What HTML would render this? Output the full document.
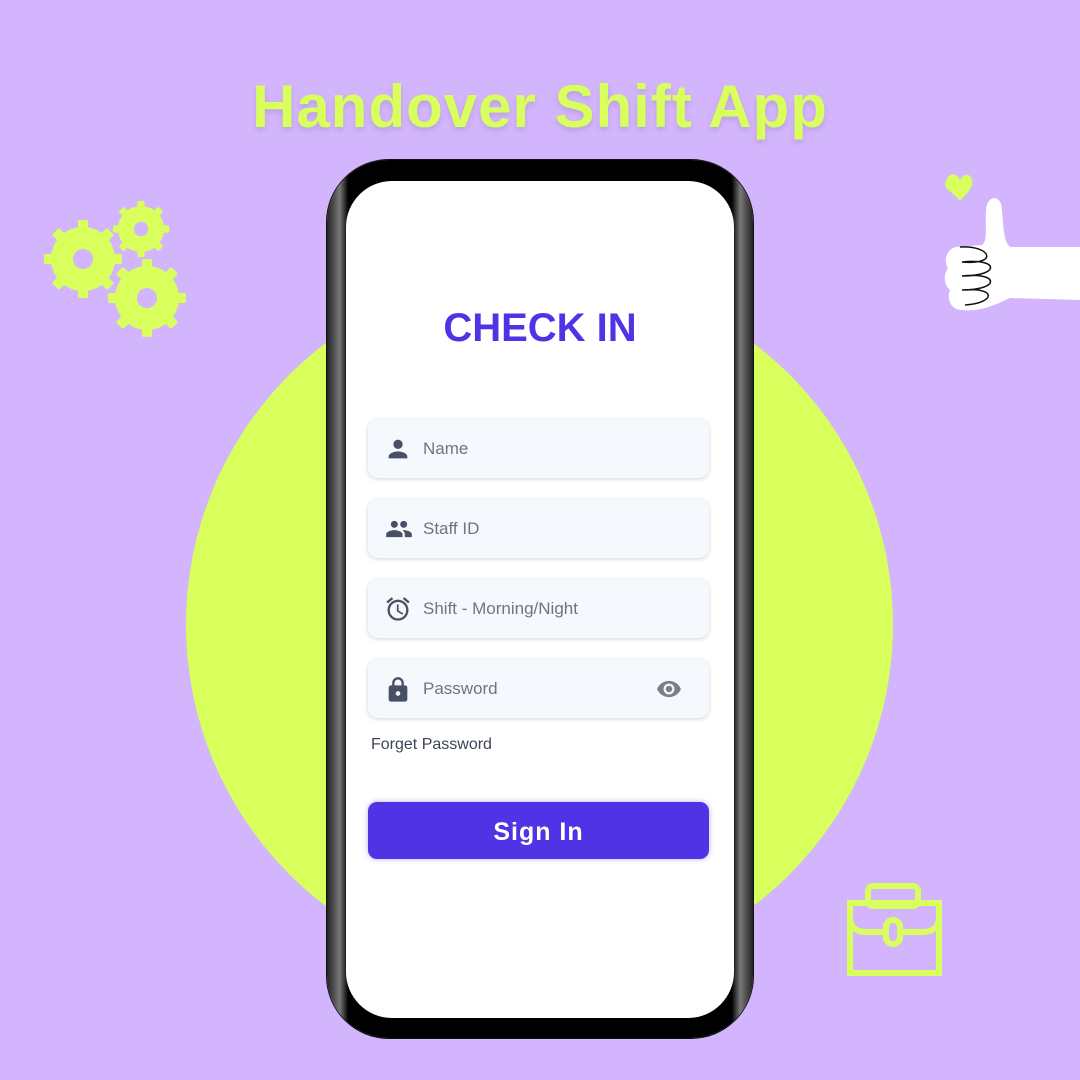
<!DOCTYPE html>
<html><head><meta charset="utf-8"><style>
*{margin:0;padding:0;box-sizing:border-box}
body{width:1080px;height:1080px;background:#d3b5fd;position:relative;overflow:hidden;font-family:"Liberation Sans",sans-serif}
.title{position:absolute;top:72px;left:0;width:1080px;text-align:center;font-size:60px;font-weight:bold;color:#d9ff5c;letter-spacing:1px;text-shadow:0 3px 6px rgba(0,0,0,.12)}
.circle{position:absolute;left:186px;top:271px;width:707px;height:707px;border-radius:50%;background:#d9ff5c}
.phone{position:absolute;left:327px;top:160px;width:426px;height:878px;border-radius:62px;background:linear-gradient(90deg,#222,#777 3%,#000 5%,#000 95%,#777 97%,#222);box-shadow:0 0 0 1px #111}
.screen{position:absolute;left:346px;top:181px;width:388px;height:837px;border-radius:46px;background:#fff}
.h{position:absolute;left:346px;width:388px;top:306px;text-align:center;font-size:40px;font-weight:bold;color:#4f33e4}
.f{position:absolute;left:368px;width:341px;height:59px;border-radius:10px;background:#f5f8fd;box-shadow:0 1px 4px rgba(0,0,0,.18)}
.f span{position:absolute;left:55px;top:20px;font-size:17px;color:#6e7481}
.f svg{position:absolute;left:16px;top:16px}
.fp{position:absolute;left:371px;top:736px;font-size:16px;color:#3d4656}
.btn{position:absolute;left:368px;top:802px;width:341px;height:57px;border-radius:9px;background:#4f33e4;color:#fff;font-size:25px;font-weight:bold;text-align:center;line-height:60px;letter-spacing:1px;box-shadow:0 0 6px rgba(79,51,228,.4)}
</style></head><body>
<div class="title">Handover Shift App</div>
<div class="circle"></div>
<svg style="position:absolute;left:0;top:0" width="1080" height="1080">
<defs>
<g id="gear"><circle r="32" fill="#d9ff5c"/>
<g fill="#d9ff5c"><rect x="-5" y="-39" width="10" height="78" rx="2"/><rect x="-5" y="-39" width="10" height="78" rx="2" transform="rotate(45)"/><rect x="-5" y="-39" width="10" height="78" rx="2" transform="rotate(90)"/><rect x="-5" y="-39" width="10" height="78" rx="2" transform="rotate(135)"/></g>
<circle r="10" fill="#d3b5fd"/></g>
</defs>
<use href="#gear" transform="translate(83,259)"/>
<use href="#gear" transform="translate(141,229) scale(.72)"/>
<use href="#gear" transform="translate(147,298)"/>
<path d="M960 201 C950 188 940 190 948 177 C952 172 958 175 960 180 C963 174 970 172 972 180 C974 188 965 195 960 201Z" fill="#d9ff5c"/>
<path d="M1080 247 L1010 247 C1002 240 1004 220 1001 204 C998 195 987 196 986 210 C985 230 988 240 982 245 L956 247 C945 250 944 262 948 268 C943 275 944 285 950 290 C946 300 952 310 962 310 C980 312 995 305 1010 298 L1080 300Z" fill="#fff"/>
<path d="M960 247 C990 245 1000 265 962 262 C1000 258 1000 276 962 276 C1000 272 1000 290 962 290 C998 287 995 303 965 305" fill="none" stroke="#111" stroke-width="1.5"/>
<g fill="none" stroke="#d9ff5c" stroke-width="6">
<rect x="868" y="886" width="50" height="20" rx="5"/>
<rect x="850" y="903" width="89" height="70"/>
<path d="M850 918 C850 928 858 932 866 932 L923 932 C931 932 939 928 939 918"/>
<rect x="886" y="920" width="14" height="24" rx="7" fill="#d3b5fd"/>
</g>
</svg>
<div class="phone"></div>
<div class="screen"></div>
<div class="h">CHECK IN</div>
<div class="f" style="top:419px"><svg width="28" height="28" viewBox="0 0 24 24"><path fill="#475064" d="M12 12a4 4 0 1 0 0-8 4 4 0 0 0 0 8zm0 2c-3 0-8 1.5-8 4.5V20h16v-1.5c0-3-5-4.5-8-4.5z"/></svg><span>Name</span></div>
<div class="f" style="top:499px"><svg width="30" height="28" viewBox="0 0 24 24"><path fill="#475064" d="M16 11a3 3 0 1 0 0-6 3 3 0 0 0 0 6zm-8 0a3 3 0 1 0 0-6 3 3 0 0 0 0 6zm0 2c-2.3 0-7 1.2-7 3.5V19h14v-2.5C15 14.2 10.3 13 8 13zm8 0c-.3 0-.6 0-1 .1 1.2.8 2 2 2 3.4V19h6v-2.5c0-2.3-4.7-3.5-7-3.5z"/></svg><span>Staff ID</span></div>
<div class="f" style="top:579px"><svg width="28" height="28" viewBox="0 0 24 24"><path fill="#475064" d="M22 5.7l-4.6-3.9-1.3 1.5 4.6 3.9L22 5.7zM7.9 3.4L6.6 1.9 2 5.7l1.3 1.5 4.6-3.8zM12.5 8H11v6l4.7 2.9.8-1.2-4-2.4V8zM12 4a9 9 0 1 0 0 18 9 9 0 0 0 0-18zm0 16a7 7 0 1 1 0-14 7 7 0 0 1 0 14z"/></svg><span>Shift - Morning/Night</span></div>
<div class="f" style="top:659px"><svg width="28" height="30" viewBox="0 0 24 24"><path fill="#475064" d="M18 8h-1V6a5 5 0 0 0-10 0v2H6a2 2 0 0 0-2 2v10a2 2 0 0 0 2 2h12a2 2 0 0 0 2-2V10a2 2 0 0 0-2-2zM9 6a3 3 0 0 1 6 0v2H9V6zm3 11a2 2 0 1 1 0-4 2 2 0 0 1 0 4z"/></svg><span>Password</span>
<svg style="left:287px;top:17px" width="28" height="26" viewBox="0 0 24 24"><path fill="#7a7f88" d="M12 4.5C7 4.5 2.7 7.6 1 12c1.7 4.4 6 7.5 11 7.5s9.3-3.1 11-7.5c-1.7-4.4-6-7.5-11-7.5zM12 17a5 5 0 1 1 0-10 5 5 0 0 1 0 10zm0-8a3 3 0 1 0 0 6 3 3 0 0 0 0-6z"/></svg></div>
<div class="fp">Forget Password</div>
<div class="btn">Sign In</div>
</body></html>
